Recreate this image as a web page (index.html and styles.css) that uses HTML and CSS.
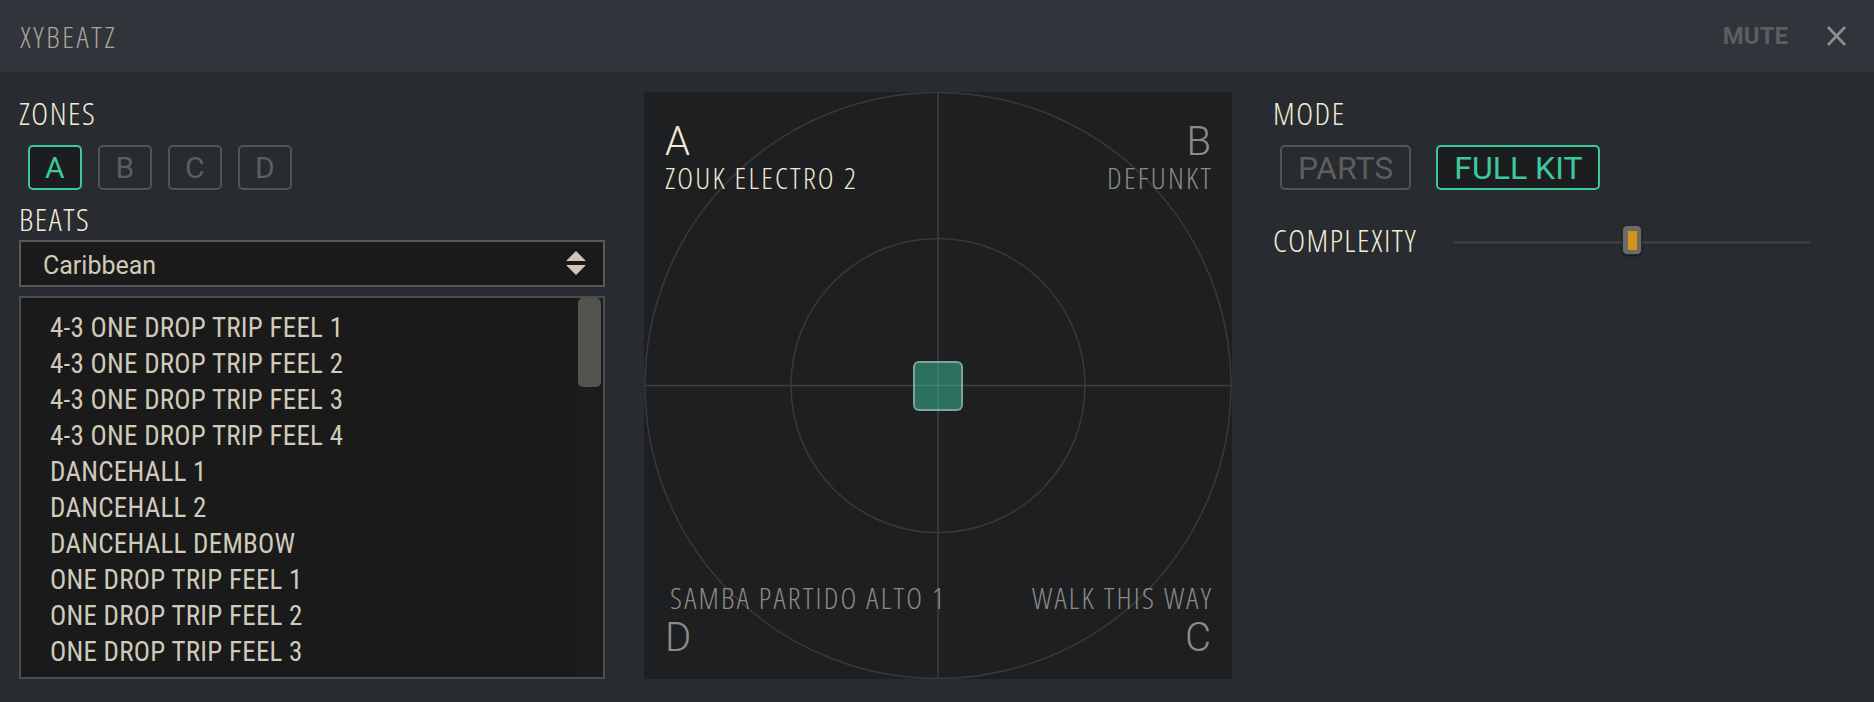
FILE: index.html
```html
<!DOCTYPE html>
<html lang="en">
<head>
  <meta charset="UTF-8">
  <title>XYBEATZ</title>
  <link rel="stylesheet" href="styles.css">
</head>
<body>
  <header class="topbar">
    <div class="brand">XYBEATZ</div>
    <div class="top-actions">
      <span class="mute">MUTE</span>
      <svg class="close" width="21" height="20" viewBox="0 0 21 20">
        <path d="M2 1 L19 19 M19 1 L2 19" stroke="#8e8f91" stroke-width="2.6" fill="none"/>
      </svg>
    </div>
  </header>

  <main class="main">
    <section class="left">
      <h2 class="label">ZONES</h2>
      <div class="zones">
        <button class="zone active">A</button>
        <button class="zone">B</button>
        <button class="zone">C</button>
        <button class="zone">D</button>
      </div>

      <h2 class="label beats-label">BEATS</h2>
      <div class="select">
        <span>Caribbean</span>
        <svg width="20" height="25" viewBox="0 0 20 25">
          <path d="M10 0 L20 10 L0 10 Z" fill="#cdc7b4"/>
          <path d="M0 14 L20 14 L10 24 Z" fill="#cdc7b4"/>
        </svg>
      </div>

      <div class="beats">
        <ul class="beat-list">
          <li>4-3 ONE DROP TRIP FEEL 1</li>
          <li>4-3 ONE DROP TRIP FEEL 2</li>
          <li>4-3 ONE DROP TRIP FEEL 3</li>
          <li>4-3 ONE DROP TRIP FEEL 4</li>
          <li>DANCEHALL 1</li>
          <li>DANCEHALL 2</li>
          <li>DANCEHALL DEMBOW</li>
          <li>ONE DROP TRIP FEEL 1</li>
          <li>ONE DROP TRIP FEEL 2</li>
          <li>ONE DROP TRIP FEEL 3</li>
        </ul>
        <div class="scroll-track"><div class="scroll-thumb"></div></div>
      </div>
    </section>

    <section class="pad">
      <svg class="pad-grid" viewBox="0 0 588 587" preserveAspectRatio="none">
        <circle cx="294" cy="293.5" r="293" fill="none" stroke="#38393c" stroke-width="1.5"/>
        <circle cx="294" cy="293.5" r="147" fill="none" stroke="#38393c" stroke-width="1.5"/>
        <line x1="294" y1="0" x2="294" y2="587" stroke="#3e3f42" stroke-width="1.5"/>
        <line x1="0" y1="293.5" x2="588" y2="293.5" stroke="#3e3f42" stroke-width="1.5"/>
      </svg>

      <div class="pad-row">
        <div class="corner current">
          <div class="corner-letter">A</div>
          <div class="corner-name">ZOUK ELECTRO 2</div>
        </div>
        <div class="corner end">
          <div class="corner-letter">B</div>
          <div class="corner-name">DEFUNKT</div>
        </div>
      </div>

      <div class="pad-row">
        <div class="corner">
          <div class="corner-name indent">SAMBA PARTIDO ALTO 1</div>
          <div class="corner-letter low">D</div>
        </div>
        <div class="corner end">
          <div class="corner-name">WALK THIS WAY</div>
          <div class="corner-letter low">C</div>
        </div>
      </div>

      <div class="puck"></div>
    </section>

    <section class="right">
      <h2 class="label">MODE</h2>
      <div class="modes">
        <button class="mode">PARTS</button>
        <button class="mode active">FULL KIT</button>
      </div>

      <div class="complexity">
        <h2 class="label">COMPLEXITY</h2>
        <div class="slider">
          <div class="slider-thumb" style="left: 47.3%"></div>
        </div>
      </div>
    </section>
  </main>
</body>
</html>
```
FILE: styles.css
```css
body {
  margin: 0;
  background-color: #282b30;
  font-family: Roboto, "Liberation Sans", sans-serif;
  width: 1874px;
  height: 702px;
  overflow: hidden;
}

/* top bar */
.topbar {
  height: 72px;
  background-color: #31343a;
  display: flex;
  align-items: center;
  justify-content: space-between;
  padding: 0 27px 0 20px;
}
.brand {
  font-family: "Open Sans", sans-serif;
  font-stretch: 75%;
  font-weight: 300;
  font-size: 30px;
  letter-spacing: 2.6px;
  color: #a9a699;
}
.top-actions {
  display: flex;
  align-items: center;
  gap: 38px;
}
.mute {
  font-weight: 700;
  font-size: 24px;
  color: #5c5e61;
}
.close {
  display: block;
}

/* layout */
.main {
  display: flex;
  padding: 20px 0 0 19px;
}
.left {
  width: 586px;
}
.right {
  margin-left: 41px;
  flex: 1;
}

.label {
  margin: 3px 0 0;
  font-family: "Open Sans", sans-serif;
  font-stretch: 75%;
  font-weight: 350;
  font-size: 32px;
  line-height: 36px;
  letter-spacing: 1.5px;
  color: #f2ebd7;
}

/* zones */
.zones {
  display: flex;
  gap: 16.5px;
  margin: 14px 0 0 9px;
}
.zone, .mode {
  height: 45px;
  box-sizing: border-box;
  border: 2px solid #545452;
  border-radius: 5px;
  background: transparent;
  color: #5e5e5b;
  font-family: Roboto, sans-serif;
  font-size: 30px;
  line-height: 1;
  padding: 0;
}
.zone {
  width: 53.5px;
}
.zone.active, .mode.active {
  border-color: #3cc99e;
  background-color: #1c1d1f;
  color: #3cc99e;
}

/* beats */
.beats-label {
  margin-top: 11px;
}
.select {
  margin-top: 3px;
  height: 47px;
  box-sizing: border-box;
  border: 2px solid #575858;
  background-color: #1a1a1a;
  display: flex;
  align-items: center;
  justify-content: space-between;
  padding: 4px 17px 0 22px;
  font-size: 25px;
  color: #d0cab8;
}
.select svg {
  display: block;
  margin-top: -4px;
}

.beats {
  margin-top: 9px;
  height: 383px;
  box-sizing: border-box;
  border: 2px solid #4c4d4e;
  background-color: #1a1a1a;
  display: flex;
  overflow: hidden;
}
.beat-list {
  flex: 1;
  list-style: none;
  margin: 0;
  padding: 12px 0 0 29px;
  font-family: "Roboto Condensed", Roboto, sans-serif;
  font-size: 27px;
  font-weight: 400;
  letter-spacing: 0.25px;
  color: #d0caba;
}
.beat-list li {
  line-height: 36px;
  white-space: nowrap;
}
.scroll-track {
  width: 25px;
  background-color: #1c1c1c;
}
.scroll-thumb {
  width: 23px;
  height: 89px;
  border-radius: 5px;
  background-color: #53544f;
}

/* xy pad */
.pad {
  position: relative;
  margin-left: 39px;
  width: 588px;
  height: 587px;
  box-sizing: border-box;
  background-color: #1e1f21;
  padding: 30px 21px 21px;
  display: flex;
  flex-direction: column;
  justify-content: space-between;
}
.pad-grid {
  position: absolute;
  left: 0;
  top: 0;
  width: 100%;
  height: 100%;
}
.pad-row {
  position: relative;
  display: flex;
  justify-content: space-between;
}
.corner {
  color: #8b8b8b;
}
.corner.end {
  text-align: right;
}
.corner.current {
  color: #f0e9d5;
}
.corner-letter {
  font-weight: 300;
  font-size: 40px;
  line-height: 40px;
}
.corner-letter.low {
  margin-top: 4px;
}
.corner-name {
  font-family: "Open Sans", sans-serif;
  font-stretch: 75%;
  font-weight: 300;
  font-size: 30px;
  line-height: 32px;
  letter-spacing: 2.2px;
  margin-right: -2.2px;
}
.corner-name.indent {
  margin-left: 5px;
}
.puck {
  position: absolute;
  left: 50%;
  top: 50%;
  width: 50px;
  height: 50px;
  box-sizing: border-box;
  transform: translate(-50%, -50%);
  border: 2px solid rgba(190, 205, 200, 0.55);
  border-radius: 6px;
  background-color: rgba(60, 203, 159, 0.48);
}

/* mode */
.modes {
  display: flex;
  gap: 25px;
  margin: 14px 0 0 7px;
}
.mode {
  padding: 0 16px;
  font-size: 32px;
}

.complexity {
  display: flex;
  align-items: center;
  margin-top: 32px;
}
.complexity .label {
  margin: 0;
}
.slider {
  position: relative;
  margin: 4px 0 0 36px;
  width: 357px;
  height: 3px;
  border-radius: 2px;
  background-color: #3a3c3f;
  box-shadow: 0 1px 0 #222427;
}
.slider-thumb {
  position: absolute;
  top: calc(50% - 2px);
  width: 20px;
  height: 30px;
  box-sizing: border-box;
  transform: translate(-50%, -50%);
  margin-left: 10px;
  border: 1px solid #2a2a2a;
  border-radius: 5px;
  background-color: #6b6b69;
  box-shadow: 0 1px 2px rgba(0, 0, 0, 0.5);
  display: flex;
  align-items: center;
  justify-content: center;
}
.slider-thumb::after {
  content: "";
  width: 9px;
  height: 19px;
  background-color: #d3931d;
}
```
